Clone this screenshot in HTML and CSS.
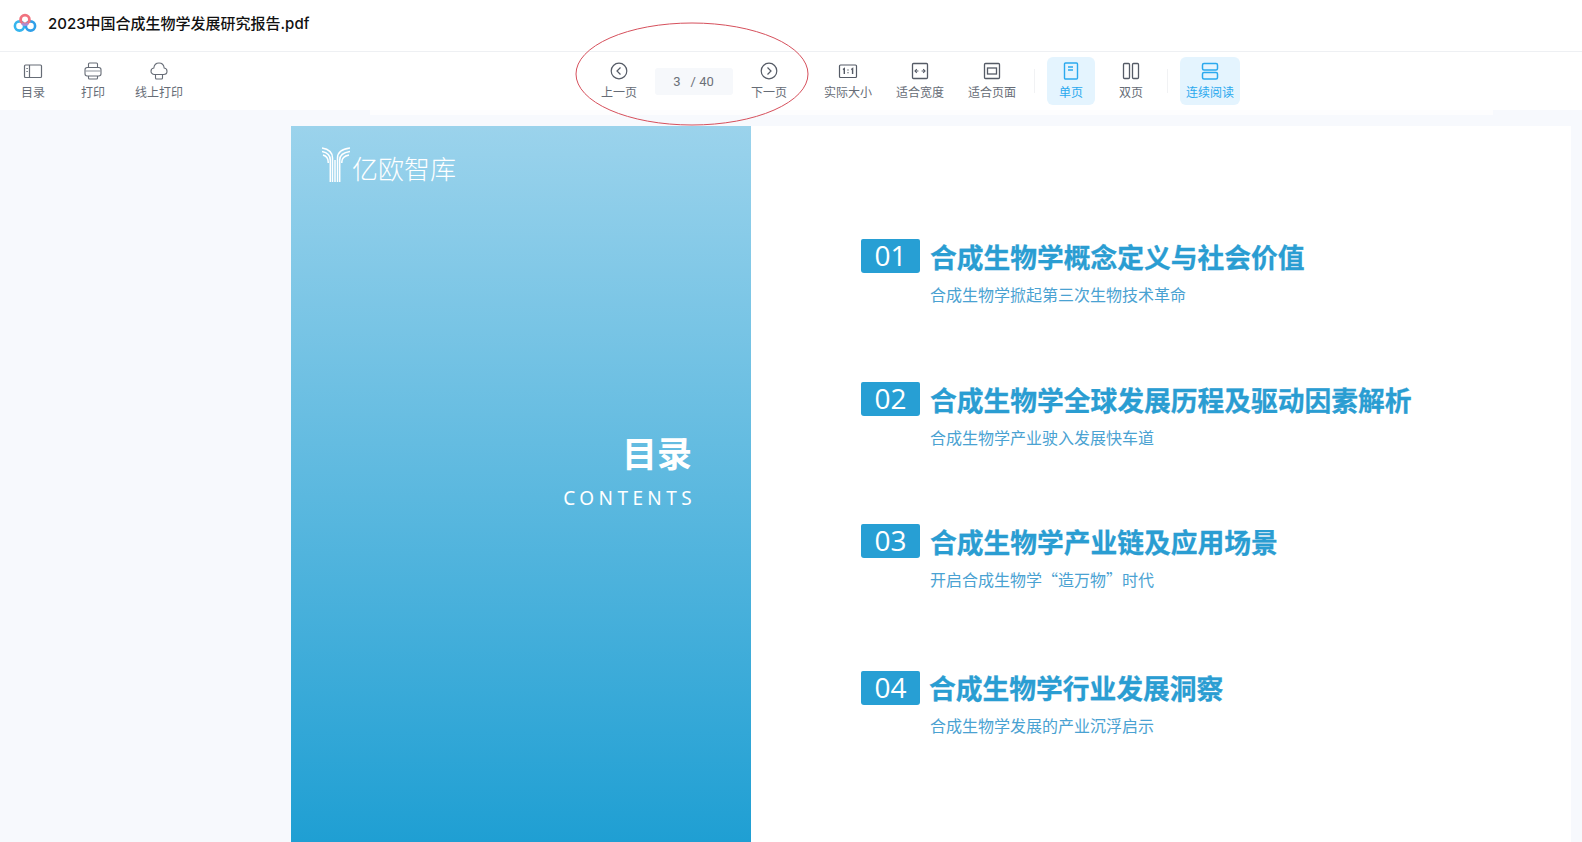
FILE: index.html
```html
<!DOCTYPE html>
<html lang="zh">
<head>
<meta charset="utf-8">
<title>2023中国合成生物学发展研究报告.pdf</title>
<link rel="stylesheet" href="styles.css">
</head>
<body>
<header class="titlebar">
  <svg class="brand" viewBox="0 0 24 20" width="24" height="20" fill="none">
    <circle cx="6.5" cy="13" r="4.6" stroke="#35b5ee" stroke-width="2.6"/>
    <circle cx="17.5" cy="13" r="4.6" stroke="#2f9fe8" stroke-width="2.6"/>
    <circle cx="12" cy="6.5" r="4.4" stroke="#f0727f" stroke-width="2.8"/>
    <path d="M9 10.5a4.5 4.5 0 0 0 6 0" stroke="#a98fd6" stroke-width="2.4"/>
  </svg>
  <h1 class="doc-name">2023中国合成生物学发展研究报告.pdf</h1>
</header>

<nav class="toolbar">
  <div class="tool">
    <svg class="ico" viewBox="0 0 20 20" fill="none" stroke="#666c76" stroke-width="1.2"><rect x="1.5" y="4" width="17" height="12.500" rx="1"/><path d="M6.500 4v12.500M3.400 7.500h1.400M3.400 10.500h1.400"/></svg>
    <span>目录</span>
  </div>
  <div class="tool">
    <svg class="ico" viewBox="0 0 20 20" fill="none" stroke="#666c76" stroke-width="1.1"><path d="M5.500 6.500V3a1 1 0 0 1 1-1h7a1 1 0 0 1 1 1v3.500"/><rect x="2" y="6.500" width="16" height="8.500" rx="2.200"/><path d="M2 10h16" stroke="#9a9ea6"/><path d="M5.500 15v2a1 1 0 0 0 1 1h7a1 1 0 0 0 1-1v-2"/></svg>
    <span>打印</span>
  </div>
  <div class="tool gap-18">
    <svg class="ico" viewBox="0 0 20 20" fill="none" stroke="#666c76" stroke-width="1.1"><path d="M5.500 13.500C3.200 13.500 2 11.800 2 10.200 2 8.400 3.300 7.200 4.800 7 5.200 4.100 7.400 2 10 2s4.800 2.100 5.200 5c1.500.2 2.800 1.400 2.800 3.200 0 1.600-1.200 3.300-3.500 3.300z"/><path d="M6.500 13.500v3.500a1 1 0 0 0 1 1h5a1 1 0 0 0 1-1v-3.500"/></svg>
    <span>线上打印</span>
  </div>

  <div class="tool gap-center">
    <svg class="ico" viewBox="0 0 20 20" fill="none" stroke="#555b66" stroke-width="1.2"><circle cx="10" cy="10" r="7.800"/><path d="M11.500 6.500L8 10l3.500 3.500"/></svg>
    <span>上一页</span>
  </div>
  <div class="pager"><span class="pager-cur">3</span><span>/ 40</span></div>
  <div class="tool">
    <svg class="ico" viewBox="0 0 20 20" fill="none" stroke="#555b66" stroke-width="1.2"><circle cx="10" cy="10" r="7.800"/><path d="M8.500 6.500L12 10l-3.500 3.500"/></svg>
    <span>下一页</span>
  </div>

  <div class="tool gap-31">
    <svg class="ico" viewBox="0 0 20 20" fill="none" stroke="#555b66" stroke-width="1.2"><rect x="1.500" y="4" width="17" height="12.500" rx="1"/><path d="M5 8.600l1.300-.9v5.300M13.300 8.600l1.300-.9v5.300" stroke-width="1.400"/><path d="M10 8.600v1M10 11.200v1" stroke-width="1.400"/></svg>
    <span>实际大小</span>
  </div>
  <div class="tool gap-24">
    <svg class="ico" viewBox="0 0 20 20" fill="none" stroke="#555b66" stroke-width="1.3"><rect x="2.500" y="2.500" width="15" height="15" rx="1"/><path d="M5 10h3.400M11.600 10H15" stroke-width="1.200"/><path d="M6.800 8.200L5 10l1.800 1.800M13.200 8.200L15 10l-1.800 1.800" stroke-width="1.100"/></svg>
    <span>适合宽度</span>
  </div>
  <div class="tool gap-24">
    <svg class="ico" viewBox="0 0 20 20" fill="none" stroke="#555b66" stroke-width="1.300"><rect x="2.500" y="2.500" width="15" height="15" rx="1"/><rect x="5.500" y="7" width="9" height="6"/></svg>
    <span>适合页面</span>
  </div>
  <i class="sep gap-18"></i>
  <div class="tool active">
    <svg class="ico" viewBox="0 0 20 20" fill="none" stroke="#2aa9ee" stroke-width="1.400"><rect x="3.500" y="2" width="13" height="16" rx="1"/><path d="M7 6h5M7 9h5"/></svg>
    <span>单页</span>
  </div>
  <div class="tool">
    <svg class="ico" viewBox="0 0 20 20" fill="none" stroke="#555b66" stroke-width="1.300"><rect x="2.500" y="2.500" width="6" height="15" rx="1"/><rect x="11.500" y="2.500" width="6" height="15" rx="1"/></svg>
    <span>双页</span>
  </div>
  <i class="sep"></i>
  <div class="tool active wide">
    <svg class="ico" viewBox="0 0 20 20" fill="none" stroke="#2aa9ee" stroke-width="1.500"><rect x="2.500" y="2.500" width="15" height="6.500" rx="1.500"/><rect x="2.500" y="11.500" width="15" height="6.500" rx="1.500"/></svg>
    <span>连续阅读</span>
  </div>
</nav>

<main class="viewer">
  <div class="strip"></div>
  <article class="page">
    <section class="cover">
      <div class="logo">
        <svg class="logo-mark" viewBox="0 0 28 35" fill="none" stroke="#fff" stroke-width="1.500">
          <path d="M0 1c6 1 10.500 4 10.500 10v24M0 4.500c5 1 8.300 3.500 8.300 8.500v22M1 8c3.500 1 5.200 3 5.200 7v1"/>
          <path d="M28 1c-8 1-12.500 4-12.500 10v24M28 4.500c-7 1-10.300 3.500-10.300 8.500v22M27 8c-5 1-7.200 3-7.200 7v1"/>
          <path d="M13 13v22"/>
        </svg>
        <span class="logo-text">亿欧智库</span>
      </div>
      <div class="cover-head">
        <h2>目录</h2>
        <p>CONTENTS</p>
      </div>
    </section>
    <section class="toc">
      <div class="entry">
        <div class="entry-head"><span class="num">01</span><h3>合成生物学概念定义与社会价值</h3></div>
        <p>合成生物学掀起第三次生物技术革命</p>
      </div>
      <div class="entry">
        <div class="entry-head"><span class="num">02</span><h3>合成生物学全球发展历程及驱动因素解析</h3></div>
        <p>合成生物学产业驶入发展快车道</p>
      </div>
      <div class="entry">
        <div class="entry-head"><span class="num">03</span><h3>合成生物学产业链及应用场景</h3></div>
        <p>开启合成生物学“造万物”时代</p>
      </div>
      <div class="entry entry-last">
        <div class="entry-head"><span class="num">04</span><h3>合成生物学行业发展洞察</h3></div>
        <p>合成生物学发展的产业沉浮启示</p>
      </div>
    </section>
  </article>
</main>

<svg class="annotation" width="234" height="104" viewBox="0 0 234 104" fill="none"><ellipse cx="117" cy="52" rx="116" ry="51" stroke="#d6505c" stroke-width="1"/></svg>
</body>
</html>
```

FILE: styles.css
```css
* { box-sizing: border-box; }

html, body {
  margin: 0;
  height: 100%;
  overflow: hidden;
}

body {
  background: #f7f9fd;
  font-family: "Noto Sans CJK SC", "Noto Sans", sans-serif;
  color: #555b66;
}

.titlebar {
  display: flex;
  align-items: center;
  gap: 11px;
  height: 52px;
  padding: 0 0 6px 13px;
  background: #fff;
  border-bottom: 1px solid #eef0f3;
}

.brand { flex: none; }

.doc-name {
  margin: 0;
  font-family: "Inter", "Noto Sans CJK SC", sans-serif;
  font-size: 15px;
  font-weight: 500;
  color: #111;
}

.toolbar {
  display: flex;
  align-items: center;
  gap: 12px;
  height: 58px;
  padding-left: 9px;
  background: #fff;
}

.tool {
  flex: none;
  display: flex;
  flex-direction: column;
  align-items: center;
  width: 48px;
  height: 48px;
  padding-top: 4px;
  border-radius: 6px;
  font-size: 12px;
  line-height: 16px;
  white-space: nowrap;
  color: #666c76;
}

.ico {
  width: 20px;
  height: 20px;
  margin-bottom: 3px;
}

.gap-18 { margin-left: 6px; }
.gap-24 { margin-left: 12px; }
.gap-31 { margin-left: 19px; }
.gap-center { margin-left: 400px; }

.active {
  background: #e4f4fe;
  color: #2aa9ee;
}

.wide { width: 60px; }

.pager {
  flex: none;
  display: flex;
  justify-content: center;
  align-items: center;
  gap: 10px;
  width: 78px;
  height: 27px;
  padding: 1px 1px 0 0;
  background: #f6f8fb;
  border-radius: 3px;
  font-family: "Roboto", sans-serif;
  font-size: 13px;
  color: #6c7078;
}

.sep {
  flex: none;
  width: 1px;
  height: 24px;
  background: #f1f2f4;
}

.sep.gap-18 { margin-left: 6px; }

.viewer { height: 732px; }

.strip {
  width: 1123px;
  height: 5px;
  margin-left: 370px;
  background: #fdfdfe;
}

.page {
  display: flex;
  width: 1280px;
  height: 900px;
  margin: 11px 0 0 291px;
  background: #fff;
}

.cover {
  flex: none;
  width: 460px;
  padding: 21px 56px 0 31px;
  background: linear-gradient(180deg, #9bd3ec 0%, #1f9fd3 100%);
  background-size: 100% 716px;
  background-repeat: no-repeat;
  color: #fff;
}

.logo {
  display: flex;
  align-items: flex-end;
  gap: 2px;
}

.logo-mark {
  flex: none;
  width: 28px;
  height: 35px;
}

.logo-text {
  font-size: 26px;
  font-weight: 300;
  line-height: 28px;
  color: #fff;
}

.cover-head {
  margin-top: 246px;
  text-align: right;
}

.cover-head h2 {
  margin: 0 3px 0 0;
  font-size: 35px;
  font-weight: 700;
  line-height: 48px;
}

.cover-head p {
  margin: 9px -1px 0 0;
  font-family: "Noto Sans", sans-serif;
  font-size: 19px;
  line-height: 26px;
  letter-spacing: 4.400px;
}

.toc {
  padding: 113px 0 0 110px;
}

.entry {
  height: 142.500px;
}

.entry-last { margin-top: 4px; }

.entry-head {
  display: flex;
  align-items: center;
  gap: 10px;
  height: 34px;
}

.num {
  flex: none;
  width: 59px;
  height: 34px;
  background: #279fd4;
  border-radius: 2px 2px 3px 3px;
  color: #fff;
  font-family: "Open Sans", sans-serif;
  font-size: 28px;
  line-height: 33px;
  text-align: center;
}

.entry-head h3 {
  margin: 2px 0 0;
  color: #2a9dd2;
  font-size: 26.750px;
  font-weight: 700;
  line-height: 36px;
  white-space: nowrap;
  -webkit-text-stroke: 0.3px #2a9dd2;
}

.entry-last h3 {
  margin: 0 0 0 -1px;
}

.entry p {
  margin: 9px 0 0 69px;
  color: #4aa2d2;
  font-size: 16px;
  line-height: 24px;
}

.entry-last p {
  margin-top: 8px;
}

.annotation {
  position: absolute;
  left: 575px;
  top: 22px;
}
```
